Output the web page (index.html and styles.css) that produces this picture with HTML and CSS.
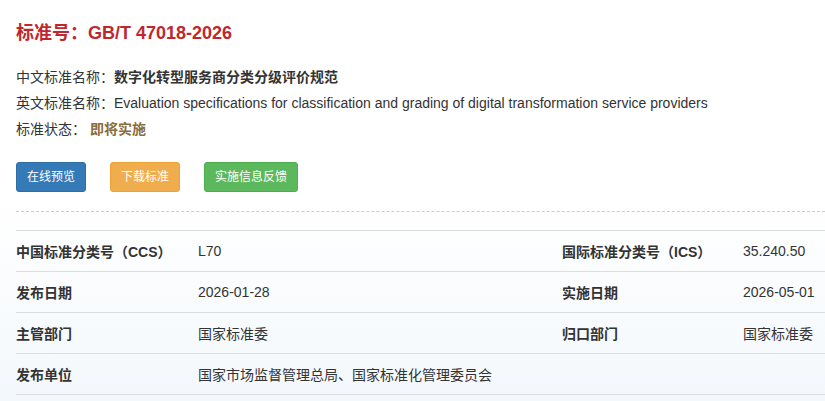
FILE: index.html
```html
<!DOCTYPE html>
<html lang="zh-CN">
<head>
<meta charset="utf-8">
<title>GB/T 47018-2026</title>
<link rel="stylesheet" href="styles.css">
</head>
<body>
<div class="page">
  <h1 class="title">标准号：GB/T 47018-2026</h1>
  <div class="info">
    <div class="info-line">中文标准名称：<strong>数字化转型服务商分类分级评价规范</strong></div>
    <div class="info-line">英文标准名称：Evaluation specifications for classification and grading of digital transformation service providers</div>
    <div class="info-line">标准状态： <span class="status">即将实施</span></div>
  </div>
  <div class="actions">
    <a class="btn btn-blue">在线预览</a>
    <a class="btn btn-orange">下载标准</a>
    <a class="btn btn-green">实施信息反馈</a>
  </div>
  <div class="divider"></div>
  <div class="table">
    <div class="row">
      <div class="cell label">中国标准分类号（CCS）</div>
      <div class="cell">L70</div>
      <div class="cell label">国际标准分类号（ICS）</div>
      <div class="cell">35.240.50</div>
    </div>
    <div class="row">
      <div class="cell label">发布日期</div>
      <div class="cell">2026-01-28</div>
      <div class="cell label">实施日期</div>
      <div class="cell">2026-05-01</div>
    </div>
    <div class="row">
      <div class="cell label">主管部门</div>
      <div class="cell">国家标准委</div>
      <div class="cell label">归口部门</div>
      <div class="cell">国家标准委</div>
    </div>
    <div class="row">
      <div class="cell label">发布单位</div>
      <div class="cell wide">国家市场监督管理总局、国家标准化管理委员会</div>
    </div>
  </div>
</div>
</body>
</html>
```

FILE: styles.css
```css
html, body {
  margin: 0;
  padding: 0;
}
body {
  font-family: "Liberation Sans", Arial, "Noto Sans CJK SC", sans-serif;
  font-size: 14px;
  color: #333;
  background: linear-gradient(to bottom, #ffffff 0px, #ffffff 200px, #f3f8fc 401px);
  min-height: 401px;
  overflow: hidden;
}
.page {
  padding: 20px 0 0 16px;
}
.title {
  margin: 0;
  font-size: 18px;
  line-height: 26px;
  font-weight: bold;
  color: #c0272d;
}
.info {
  margin-top: 18px;
}
.info-line {
  line-height: 26px;
  white-space: nowrap;
}
.info-line strong {
  font-weight: bold;
}
.status {
  color: #8a6d3b;
  font-weight: bold;
}
.actions {
  display: flex;
  gap: 24px;
  margin-top: 20px;
}
.btn {
  display: inline-block;
  padding: 5px 10px;
  font-size: 12px;
  line-height: 18px;
  border: 1px solid transparent;
  border-radius: 3px;
  color: #fff;
  white-space: nowrap;
}
.btn-blue {
  background: #337ab7;
  border-color: #2e6da4;
}
.btn-orange {
  background: #f0ad4e;
  border-color: #eea236;
}
.btn-green {
  background: #5cb85c;
  border-color: #4cae4c;
}
.divider {
  margin-top: 19px;
  border-top: 1px dashed #ccc;
}
.table {
  margin-top: 18px;
  border-top: 1px solid #ddd;
}
.row {
  display: grid;
  grid-template-columns: 182px 364px 181px 1fr;
  height: 40px;
  border-bottom: 1px solid #ddd;
  align-items: center;
}
.cell {
  white-space: nowrap;
}
.cell.label {
  font-weight: bold;
}
.cell.wide {
  grid-column: 2 / 5;
}
```
